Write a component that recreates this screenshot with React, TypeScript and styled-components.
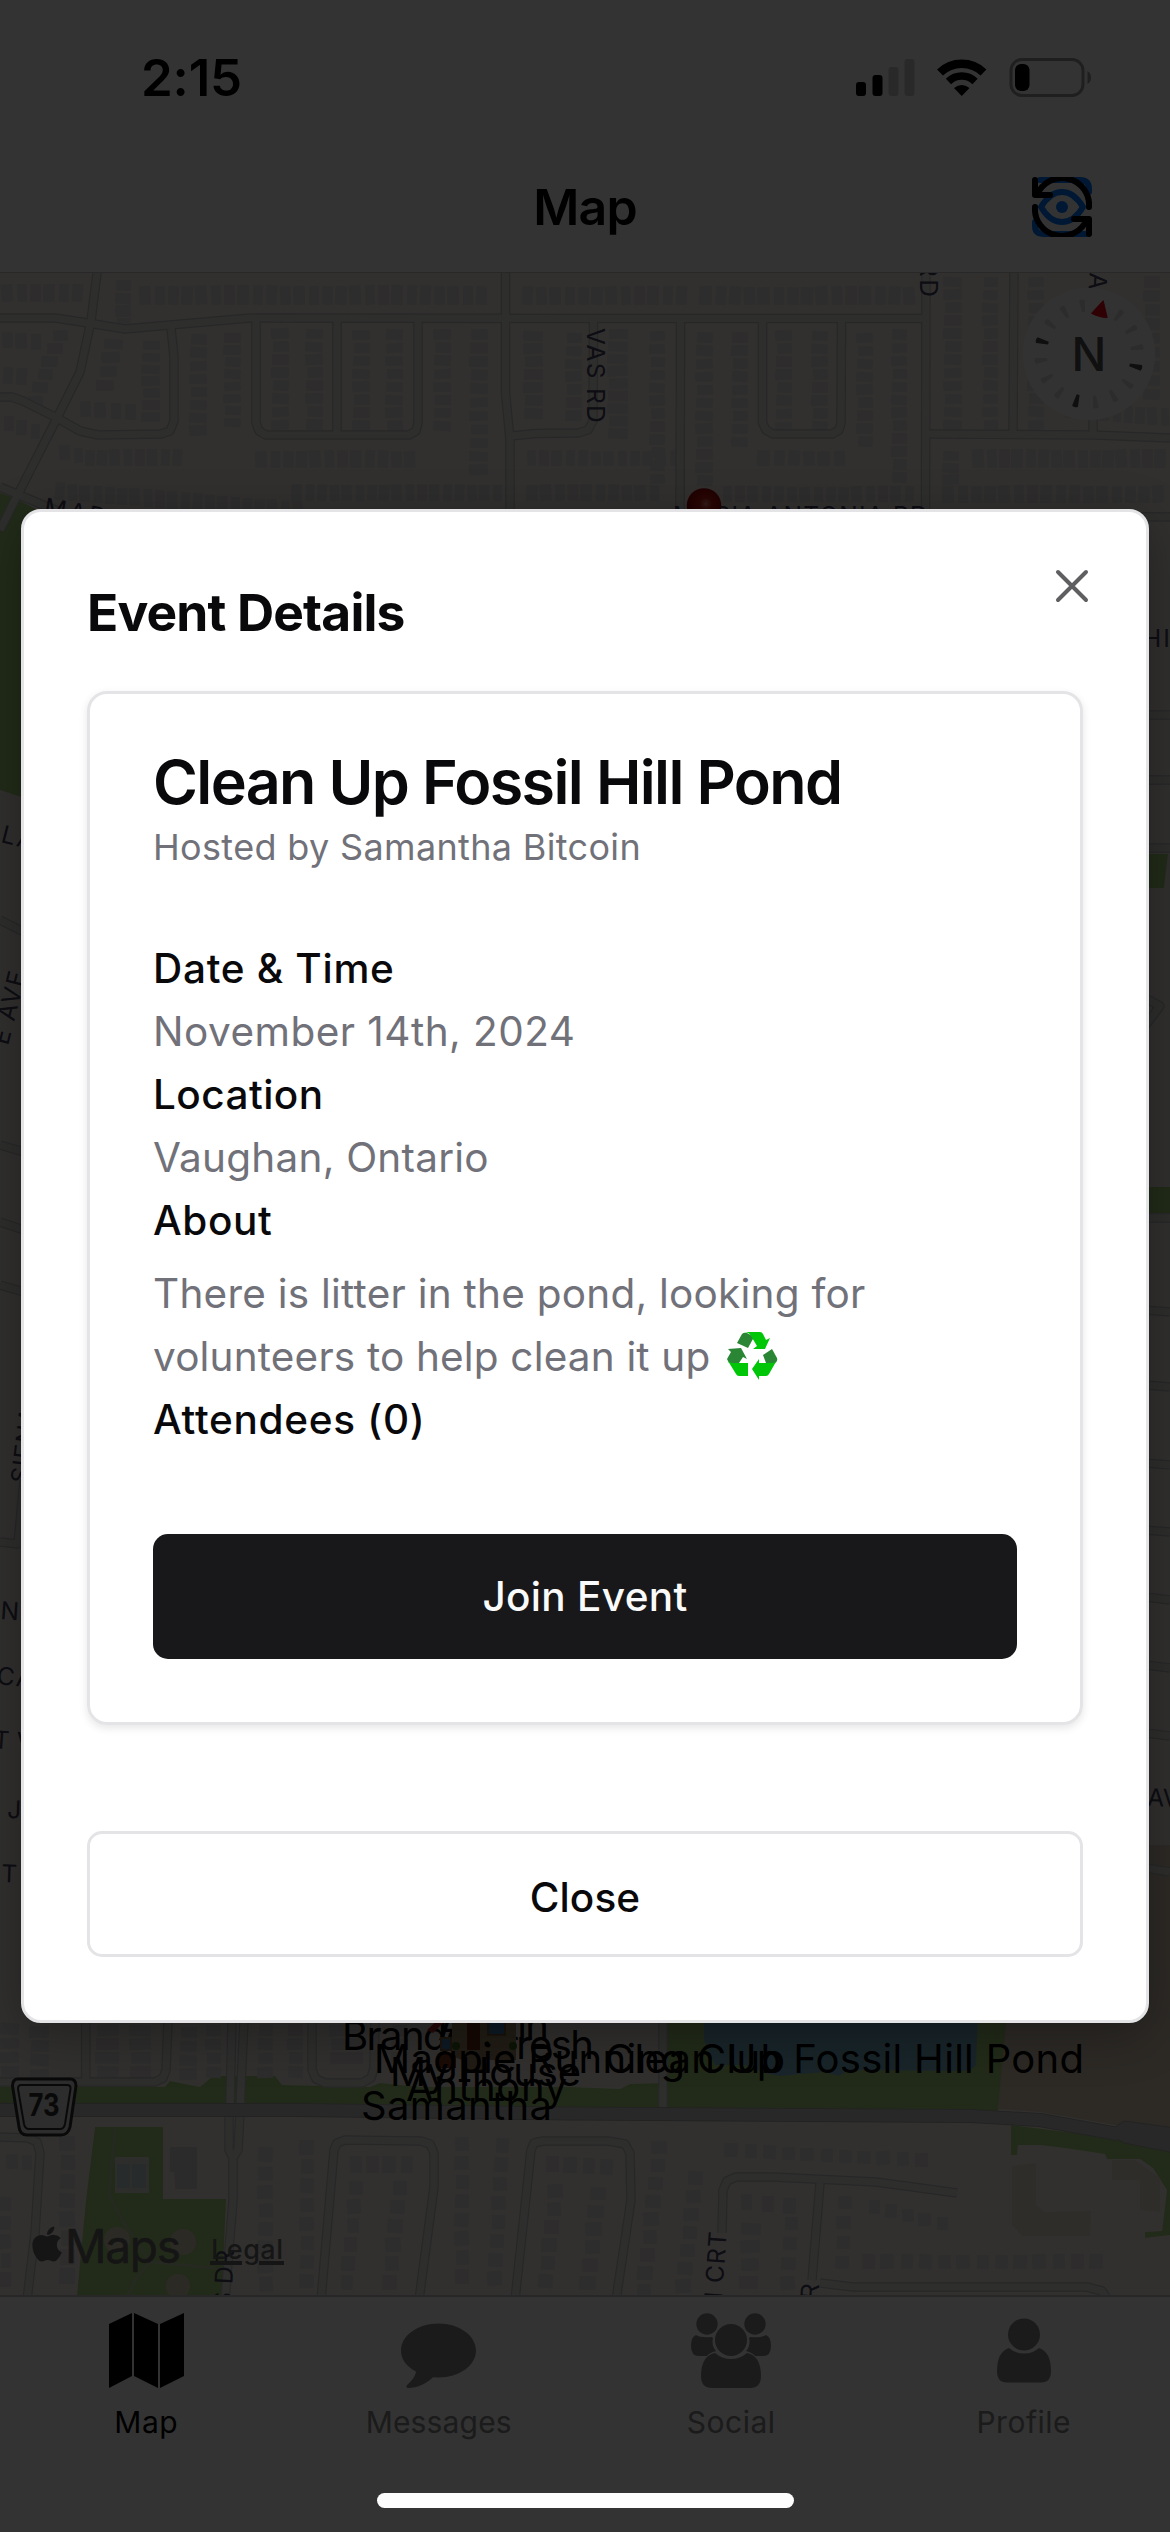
import React from "react";
import styled, { createGlobalStyle } from "styled-components";
import { FaApple } from "react-icons/fa";

const GlobalStyle = createGlobalStyle`
  *, *::before, *::after { box-sizing: border-box; }
  html, body { margin: 0; padding: 0; background: #fff; }
  body { font-family: Inter, "Liberation Sans", sans-serif; }
  button { font-family: inherit; margin: 0; cursor: pointer; }
`;

const Screen = styled.div`
  position: relative;
  width: 1170px;
  height: 2532px;
  overflow: hidden;
  display: flex;
  flex-direction: column;
  background: #fff;
`;

const StatusBar = styled.div`
  height: 141px;
  padding: 14px 79px 0 141px;
  display: flex;
  align-items: center;
  justify-content: space-between;
`;

const Clock = styled.span`
  font-size: 51px;
  font-weight: 600;
  letter-spacing: -0.2px;
  color: #000;
`;

const StatusIcons = styled.svg`
  display: block;
  width: 235px;
  height: 39px;
`;

const NavBar = styled.header`
  height: 132px;
  padding: 0 78px;
  display: grid;
  grid-template-columns: 60px 1fr 60px;
  align-items: center;
  border-bottom: 1px solid #c8c8c8;
`;

const NavTitle = styled.h1`
  grid-column: 2;
  margin: 0;
  text-align: center;
  font-size: 50px;
  line-height: 60px;
  font-weight: 600;
  letter-spacing: -0.8px;
  color: #000;
`;

const ViewToggle = styled.svg`
  width: 60px;
  height: 60px;
  display: block;
`;

const MapCanvas = styled.svg`
  display: block;
  width: 1170px;
  height: 2022px;
  flex: none;
  font-family: Inter, "Liberation Sans", sans-serif;
`;

const TabBar = styled.nav`
  flex: 1;
  display: grid;
  grid-template-columns: repeat(4, 1fr);
  border-top: 2px solid #c0c0c0;
  background: #fcfcfc;
`;

const Tab = styled.div<{ $active?: boolean }>`
  display: flex;
  flex-direction: column;
  align-items: center;
  color: ${(p) => (p.$active ? "#000" : "#868686")};
`;

const TabIcon = styled.svg`
  margin-top: 16px;
  height: 75px;
  fill: currentColor;
  display: block;
`;

const TabLabel = styled.span<{ $spacing?: number }>`
  margin-top: 16px;
  font-size: 30px;
  line-height: 36px;
  font-weight: 400;
  letter-spacing: ${(p) => p.$spacing ?? 0}px;
`;

const Scrim = styled.div`
  position: absolute;
  inset: 0;
  background: rgba(0, 0, 0, 0.8);
  display: flex;
  align-items: center;
  justify-content: center;
`;

const Dialog = styled.section`
  position: relative;
  width: 1128px;
  height: 1514px;
  padding: 63px;
  display: flex;
  flex-direction: column;
  background: #fff;
  border: 3px solid #e4e4e7;
  border-radius: 20px;
  box-shadow: 0 12px 50px rgba(0, 0, 0, 0.32);
`;

const DialogTitle = styled.h2`
  margin: 0 0 41px;
  font-size: 51.5px;
  line-height: 75px;
  font-weight: 700;
  letter-spacing: -0.85px;
  color: #09090b;
`;

const DismissButton = styled.button`
  position: absolute;
  top: 50px;
  right: 50px;
  width: 48px;
  height: 48px;
  padding: 0;
  border: 0;
  background: none;
  color: #5f5f61;
  svg { display: block; }
`;

const Card = styled.article`
  height: 1034px;
  padding: 63px;
  display: flex;
  flex-direction: column;
  border: 3px solid #e4e4e7;
  border-radius: 20px;
  box-shadow: 0 3px 8px rgba(0, 0, 0, 0.1);
`;

const EventName = styled.h3`
  margin: 0 0 12px;
  font-size: 61px;
  line-height: 51px;
  font-weight: 600;
  letter-spacing: -1.63px;
  color: #09090b;
  white-space: nowrap;
`;

const Host = styled.p`
  margin: 0 0 63px;
  font-size: 36px;
  line-height: 54px;
  letter-spacing: 0.34px;
  color: #71717a;
`;

const Details = styled.dl`
  margin: 0;
  font-size: 40.5px;
  line-height: 63px;
`;

const Term = styled.dt<{ $spacing?: number }>`
  font-weight: 500;
  color: #09090b;
  letter-spacing: ${(p) => p.$spacing ?? 0}px;
`;

const Value = styled.dd<{ $top?: number; $spacing?: number }>`
  margin: ${(p) => p.$top ?? 0}px 0 0;
  color: #71717a;
  letter-spacing: ${(p) => p.$spacing ?? 0}px;
`;

const Line = styled.span<{ $spacing?: number }>`
  display: flex;
  align-items: center;
  white-space: nowrap;
  letter-spacing: ${(p) => p.$spacing ?? 0}px;
`;

const RecycleGlyph = styled.svg`
  width: 51px;
  height: 48px;
  margin-left: 17px;
  margin-bottom: 2px;
`;

const Button = styled.button<{ $variant: "solid" | "outline" }>`
  flex: none;
  height: ${(p) => (p.$variant === "solid" ? 125 : 126)}px;
  margin-top: auto;
  padding: ${(p) => (p.$variant === "solid" ? "0" : "6px 0 0")};
  border-radius: 15px;
  font-size: 40.5px;
  font-weight: 500;
  letter-spacing: ${(p) => (p.$variant === "solid" ? 0.3 : 0.1)}px;
  border: ${(p) => (p.$variant === "solid" ? "0" : "3px solid #e4e4e7")};
  background: ${(p) => (p.$variant === "solid" ? "#18181b" : "#fff")};
  color: ${(p) => (p.$variant === "solid" ? "#fafafa" : "#09090b")};
`;

const HomeIndicator = styled.div`
  position: absolute;
  left: 377px;
  bottom: 24px;
  width: 417px;
  height: 15px;
  border-radius: 8px;
  background: #fdfdfd;
`;

/* ---------- map data ---------- */

const minorRoads: string[] = [
  "0,318 55,318 88,323 125,329 170,325 250,318 600,318.5 926,318.5",
  "98,265 91,321 80,372 57,418 10,510 0,530",
  "0,397 12,397 23,401 57,418 80,431 98,435 161,434 170,431 174,421 174,357 171,328",
  "256,321 256,423 259,431 266,435 409,435 416,431 418,423 418,321",
  "337,321 337,432",
  "505.5,265 505.5,393 510,440 510,520",
  "511,436 536,433.5 578,433 588,430 593,421 593.5,320",
  "680.5,321 680,520",
  "762.5,321 762.5,423 766,430 773,434 832,434 839,430 841,423 841.5,321",
  "926,265 925.5,520",
  "1014,265 1013,432",
  "926,434 1094,435 1170,438",
  "1093,410 1093,433",
  "0,487 60,512",
  "930,515 1170,517",
  "85.7,2020 85.7,2080",
  "168,2020 166,2070 163,2078 155,2082 0,2082",
  "232,2020 230,2108",
  "244,2020 240,2108",
  "229,2112 229,2150 233,2158 233,2200 225,2300",
  "240,2112 238,2150 233,2158",
  "312,2020 312,2070 316,2079 325,2083 362,2083 371,2078 374,2068 375,2020",
  "0,2137 28,2138 37,2142 40,2153 35,2233 27,2300",
  "321,2300 334,2150 337,2143 345,2140 421,2141 430,2144 434,2153 434,2187 419,2300",
  "515,2300 531,2150 534,2143 543,2141 608,2141 625,2144 630,2153 631,2200 616,2300",
  "722,2233 723,2190 727,2181 736,2177 773,2177 876,2182 957,2193",
  "820,2183 812,2280",
  "820,2283 853,2287 1087,2287 1102,2291 1108,2300",
  "663,2020 663,2107",
  "0,920 24,932",
  "0,1145 24,1152",
  "0,1222 24,1230",
  "0,1285 24,1292",
  "0,1542 18,1544 24,1480",
  "1145,715 1170,715",
  "1145,780 1170,780",
  "1145,848 1170,848",
  "1145,1218 1170,1218",
  "1145,1310 1170,1312",
  "1145,1385 1170,1387",
  "1145,1463 1170,1465",
  "1145,1530 1170,1532",
  "1145,1597 1170,1600",
  "1145,1665 1170,1668",
  "1145,1733 1170,1736",
  "1145,1868 1170,1872",
  "1145,998 1160,1006 1145,1026",
];

const majorRoad = "0,2110 300,2110 570,2113.5 970,2116 1040,2120 1118,2134";

/* x, y of the first lot, step to the next one, how many, lot size */
type LotRow = [number, number, number, number, number, number, number];
const lotRows: LotRow[] = [
  [2, 284, 14, 0, 6, 12, 18],
  [116, 279, 0, 13, 4, 16, 12],
  [140, 285, 14, 0, 25, 12, 20],
  [522, 286, 14, 0, 12, 12, 19],
  [700, 286, 14.5, 0, 15, 13, 19],
  [52, 330, -5, 13, 6, 17, 11],
  [105, 338, -3, 14, 4, 19, 11],
  [142, 340, 0, 12, 7, 19, 10],
  [80, 400, 15, 1, 4, 12, 17],
  [190, 334, 0, 13, 8, 18, 11],
  [224, 333, 0, 12, 8, 18, 10],
  [272, 328, 0, 13, 8, 18, 11],
  [306, 328, 0, 13, 8, 18, 11],
  [353, 329, 0, 13, 8, 18, 11],
  [386, 329, 0, 13, 8, 18, 11],
  [434, 329, 0, 13, 8, 18, 11],
  [470, 329, 0, 13.5, 11, 19, 11],
  [524, 330, 0, 13, 7, 20, 11],
  [566, 332, 0, 13, 7, 17, 11],
  [2, 331, 14, 1, 3, 12, 17],
  [2, 367, 14, 1, 2, 12, 17],
  [4, 416, 13, 4, 3, 11, 15],
  [60, 445, 13, 3, 2, 11, 15],
  [85, 449, 12.5, 0, 8, 11, 17],
  [256, 450, 13.5, 0, 12, 12, 18],
  [55, 482, 12.5, 1, 20, 11, 18],
  [292, 484, 12.5, 0, 17, 11, 17],
  [526, 450, 13, 0, 12, 11, 16],
  [527, 484, 13.5, 0, 10, 12, 17],
  [608, 328, 0, 12.5, 9, 21, 11],
  [650, 330, 0, 13, 12, 16, 11],
  [696, 332, 0, 13, 12, 18, 11],
  [732, 332, 0, 13, 9, 17, 11],
  [776, 330, 0, 13, 8, 17, 11],
  [812, 330, 0, 13, 8, 17, 11],
  [857, 332, 0, 13, 9, 17, 11],
  [892, 329, 0, 13, 12, 16, 11],
  [758, 450, 15, 0, 6, 13, 16],
  [722, 486, 13, 0, 15, 11, 16],
  [944, 276, 0, 13, 12, 19, 11],
  [983, 276, 0, 13, 12, 16, 11],
  [1028, 276, 0, 13, 12, 17, 11],
  [1064, 400, 12, 1, 9, 10, 18],
  [1144, 276, 0, 14, 9, 17, 12],
  [973, 449, 13, 0, 15, 12, 19],
  [943, 450, 0, 12, 3, 17, 11],
  [943, 485, 14, 0, 16, 12, 18],
  [0, 2023, 0, 14, 4, 20, 12],
  [30, 2026, 0, 14, 4, 20, 12],
  [96, 2024, 0, 14, 4, 24, 12],
  [130, 2024, 0, 14, 4, 22, 12],
  [180, 2026, 0, 14, 4, 18, 12],
  [206, 2024, 0, 14, 4, 16, 12],
  [258, 2024, 0, 14, 4, 16, 12],
  [288, 2024, 0, 14, 4, 16, 12],
  [330, 2024, 0, 14, 3, 34, 12],
  [392, 2024, 0, 14, 3, 16, 12],
  [60, 2135, 0, 19, 8, 16, 16],
  [258, 2147, 0, 18.5, 8, 16, 15],
  [300, 2140, 0, 19, 8, 15, 15],
  [349, 2156, 17, 0, 4, 14, 17],
  [350, 2180, -2, 19, 6, 14, 15],
  [392, 2180, -2, 19, 6, 16, 15],
  [455, 2136, 0, 19, 8, 15, 15],
  [495, 2138, -1, 19, 8, 15, 15],
  [546, 2156, 18, 1, 4, 14, 16],
  [548, 2184, -2, 18, 6, 16, 14],
  [590, 2186, -2, 18, 6, 17, 14],
  [652, 2140, -2, 18, 9, 16, 14],
  [688, 2171, -2, 18, 7, 16, 14],
  [725, 2143, 19, 1, 11, 14, 14],
  [740, 2194, 22, 2, 3, 13, 16],
  [742, 2222, -1, 18, 4, 20, 13],
  [784, 2216, -1, 20, 4, 15, 14],
  [838, 2195, -1, 20, 4, 15, 14],
  [868, 2200, 17, 4, 5, 13, 14],
  [862, 2254, 19, 0, 13, 14, 15],
  [7, 2154, 14, 1, 2, 12, 15],
  [0, 2196, 0, 19, 5, 12, 15],
];

const lotShapes = lotRows.flatMap((row, r) => {
  const [x, y, dx, dy, n, w, h] = row;
  return Array.from({ length: n }, (_, i) => {
    const k = (r * 7 + i * 13) % 11;
    return {
      x: x + dx * i + (k % 3) - 1,
      y: y + dy * i + (k % 2),
      w: w - (k % 3),
      h: h - (k % 2),
      turn: (k - 5) * 0.7,
      warm: k === 4,
    };
  });
});

type StreetName = { text: string; x: number; y: number; turn: number; size?: number; gap?: number };
const streetNames: StreetName[] = [
  { text: "VAS RD", x: 587, y: 328, turn: 90, gap: 1.3 },
  { text: "RD", x: 920, y: 261, turn: 90, gap: 2.5 },
  { text: "EA", x: 1091, y: 255, turn: 94, gap: 2.5 },
  { text: "MARIA ANTONIA RD", x: 673, y: 524, turn: 0, gap: 1.2 },
  { text: "MARIA", x: 43, y: 515, turn: 10, gap: 3 },
  { text: "LA", x: 0, y: 842, turn: 14, gap: 2 },
  { text: "E AVE", x: 8, y: 1046, turn: -76, gap: 1.5 },
  { text: "SIENA", x: 28, y: 1484, turn: -83, gap: 1 },
  { text: "N", x: 0, y: 1619, turn: 4 },
  { text: "CA", x: -4, y: 1684, turn: 6, gap: 2 },
  { text: "T V", x: -7, y: 1748, turn: 4 },
  { text: "J", x: 7, y: 1818, turn: 2 },
  { text: "T", x: 1, y: 1882, turn: 2 },
  { text: "HI", x: 1143, y: 647, turn: 0, gap: 2 },
  { text: "AV", x: 1147, y: 1806, turn: 2, gap: 0 },
  { text: "S DR", x: 231, y: 2308, turn: -87, gap: 0.5 },
  { text: "I CRT", x: 722, y: 2299, turn: -86, gap: 1 },
  { text: "R", x: 818, y: 2300, turn: -86 },
];

type Pin = { text: string; x: number; y: number; w: number };
const pinsBehindHouse: Pin[] = [
  { text: "Austin", x: 438, y: 2040, w: 111 },
  { text: "Suresh", x: 470, y: 2059, w: 124 },
  { text: "Brandon", x: 342, y: 2050, w: 150 },
];
const pinsInFront: Pin[] = [
  { text: "Magpie Running Club", x: 374, y: 2073, w: 411 },
  { text: "My House", x: 390, y: 2086, w: 191 },
  { text: "Anthony", x: 406, y: 2101, w: 161 },
  { text: "Samantha", x: 361, y: 2120, w: 191 },
  { text: "Clean Up Fossil Hill Pond", x: 605, y: 2073, w: 479 },
];

const compassTicks = Array.from({ length: 16 }, (_, i) => i).filter((i) => i > 0);

function PinLabels({ items }: { items: Pin[] }) {
  return (
    <g fill="#000" fontSize="40">
      {items.map((p) => (
        <text key={p.text} x={p.x} y={p.y} textLength={p.w}>{p.text}</text>
      ))}
    </g>
  );
}

function CityMap() {
  return (
    <MapCanvas viewBox="0 273 1170 2022" aria-label="Map">
      <defs>
        <radialGradient id="pinBall" cx="0.55" cy="0.45" r="0.6">
          <stop offset="0" stopColor="#ff8a7a" />
          <stop offset="0.3" stopColor="#c82018" />
          <stop offset="1" stopColor="#900000" />
        </radialGradient>
      </defs>
      <rect x="0" y="273" width="1170" height="2022" fill="#f5f0ea" />
      <g fill="#aad77f">
        <path d="M0 493 12 497 38 510 30 800 0 790Z" />
        <path d="M1145 854H1168L1164 888H1145Z" />
        <path d="M1145 1187H1170V1213H1145Z" />
        <path d="M0 2087H165L170 2081 200 2087 213 2076H275L282 2085 370 2087 380 2083 420 2087H570L620 2089 630 2084 667 2083V2015H1012L998 2112H0Z" />
        <path d="M95 2127H163V2199H226L222 2295H77L86 2200Z" />
        <path d="M1011 2125 1115 2138 1170 2152V2235L1145 2238V2232L1162 2231 1167 2190 1153 2168 1140 2159 1107 2159 1105 2154 1065 2148 1040 2145 1018 2145 1017 2155H1011Z" />
      </g>
      <path d="M1145 1845H1170V2140L1115 2125 1040 2112 998 2109 1007 2015H1145Z" fill="#e1d2bc" />
      <path d="M704 2015H978L976 2065Q972 2071 960 2071L850 2070 838 2076 826 2072 800 2074 780 2076 765 2073 745 2065 715 2065 704 2040Z" fill="#7db8d2" />
      <path d="M1012 2166 1036 2163 1036 2205 1045 2212 1091 2211 1090 2236 1022 2236 1012 2225Z M1112 2160H1135L1160 2178V2212L1140 2210V2180H1112Z" fill="#e8e0cc" />
      <rect x="115" y="2157" width="34" height="36" fill="#dfdfda" />
      <path d="M117 2164H130V2188H117Z M132 2164H146V2188H132Z" fill="#c8d6d4" />
      <path d="M170 2147H197V2189H175L174 2172H170Z" fill="#d9d8d6" />
      <g fill="#dccfb8">
        <circle cx="183" cy="2242" r="13" />
        <circle cx="178" cy="2286" r="12" />
        <circle cx="117" cy="2240" r="13" />
      </g>
      <path d="M115 2128 109 2195 125 2225 150 2262 135 2280 128 2295 M150 2262 215 2268" fill="none" stroke="#bfcbaa" strokeWidth="2.5" />
      <g>
        {lotShapes.map((s, i) => (
          <rect
            key={i}
            x={s.x}
            y={s.y}
            width={s.w}
            height={s.h}
            fill={s.warm ? "#e6dbd9" : "#e4e2df"}
            transform={`rotate(${s.turn} ${s.x + s.w / 2} ${s.y + s.h / 2})`}
          />
        ))}
      </g>
      <g fill="none" strokeLinejoin="round">
        <g stroke="#bcc1be" strokeWidth="9.6">
          {minorRoads.map((p, i) => <polyline key={i} points={p} />)}
        </g>
        <g stroke="#e3e3e1" strokeWidth="7.2">
          {minorRoads.map((p, i) => <polyline key={i} points={p} />)}
        </g>
        <polyline points={majorRoad} stroke="#aaa9a8" strokeWidth="14" />
        <path d="M1114 2128 1124 2121 1175 2128V2153L1124 2143 1114 2137Z" fill="#c9c9c9" stroke="#aaa9a8" />
        <polyline points={majorRoad} stroke="#c9c9c9" strokeWidth="12" />
      </g>
      <g fill="#42425e" fontWeight="400">
        {streetNames.map((s, i) => (
          <text
            key={i}
            fontSize={s.size ?? 24.5}
            letterSpacing={s.gap ?? 0}
            transform={`translate(${s.x} ${s.y}) rotate(${s.turn})`}
          >
            {s.text}
          </text>
        ))}
      </g>
      <circle cx="704" cy="505.5" r="17.3" fill="url(#pinBall)" />

      <g transform="translate(1089 354)">
        <circle r="66" fill="#fbfbfb" />
        <g transform="rotate(15)">
          {compassTicks.map((i) => (
            <path
              key={i}
              d="M-3 -54Q0 -56 3 -54L1.5 -42H-1.5Z"
              fill={i % 4 === 0 ? "#4a4a4a" : "#dcdcdc"}
              transform={`rotate(${i * 22.5})`}
            />
          ))}
          <path d="M0 -55 8 -40Q0 -38 -8 -40Z" fill="#e80014" stroke="#e80014" strokeLinejoin="round" />
        </g>
        <text y="16.5" textAnchor="middle" fontSize="46" fontWeight="500" fill="#525254">N</text>
      </g>

      <g fill="#dedede" stroke="#303030" strokeWidth="2.6" strokeLinejoin="round">
        <path d="M18 2079H70Q76 2079 76 2086L70 2127Q68 2135 61 2135H27Q20 2135 19 2127L12.500 2086Q12.500 2079 18 2079Z" strokeWidth="3" />
        <path d="M21 2085H67Q71 2085 70.500 2089L65 2124Q64 2129 60 2129H29Q25 2129 24 2124L18 2089Q18 2085 21 2085Z" strokeWidth="2" fill="none" />
      </g>
      <text x="28.500" y="2116" fontSize="31" fontWeight="700" fill="#303030" textLength="31" lengthAdjust="spacingAndGlyphs">73</text>

      <g color="#6c6c6c" fill="#6c6c6c">
        <FaApple x={27} y={2224} size={40} />
        <text x="65" y="2263" fontSize="46" fontWeight="400" stroke="#6c6c6c" strokeWidth="0.6" textLength="116">Maps</text>
        <text x="211" y="2259" fontSize="27" fontWeight="500" textLength="72">Legal</text>
        <path d="M210 2261H242V2265H210Z M259 2261H284V2265H259Z" />
      </g>

      <PinLabels items={pinsBehindHouse} />
      <g>
        <path d="M452 2056V2012H516V2060H462Z" fill="#a58c68" />
        <path d="M427 2030 442 2016 446 2020 433 2033Z" fill="#c02828" />
        <path d="M467 2015H480V2050H467Z" fill="#702818" />
        <path d="M488 2020H505V2035H488Z" fill="#4080b8" stroke="#806040" strokeWidth="2" />
        <path d="M441 2038H451V2050H441Z" fill="#4080b8" stroke="#806040" strokeWidth="2" />
        <path d="M438 2056Q448 2048 456 2056V2068H438Z" fill="#803820" />
        <path d="M462 2052H482L488 2070H464Z" fill="#a58c68" />
        <circle cx="456" cy="2046" r="4" fill="#3f6520" />
        <circle cx="513" cy="2046" r="4" fill="#3f6520" />
        <circle cx="487" cy="2044" r="2.500" fill="#000" />
      </g>
      <PinLabels items={pinsInFront} />
    </MapCanvas>
  );
}

function DeviceStatus() {
  return (
    <StatusIcons viewBox="856 58 235 39">
      <rect x="856" y="82" width="10" height="14" rx="3" />
      <rect x="872.500" y="75" width="10" height="21" rx="3" />
      <g fill="#ccc">
        <rect x="888.500" y="67" width="10" height="29" rx="3" />
        <rect x="904.500" y="59" width="10" height="37" rx="3" />
      </g>
      <g fill="none" stroke="#000">
        <path d="M940 72.500A31.500 31.500 0 0 1 983.500 72.500" strokeWidth="8.500" />
        <path d="M948.500 81.500A19 19 0 0 1 975 81.500" strokeWidth="7.500" />
      </g>
      <path d="M954 88Q961.700 82 969.500 88L961.700 96Z" />
      <rect x="1011" y="59.500" width="72" height="36" rx="11" fill="none" stroke="#999" strokeWidth="3" />
      <rect x="1015" y="64" width="14.500" height="27" rx="6" />
      <path d="M1087.500 71Q1091 73 1091 77.500T1087.500 84Z" fill="#999" />
    </StatusIcons>
  );
}

export default function App() {
  return (
    <>
      <GlobalStyle />
      <Screen>
        <StatusBar>
          <Clock>2:15</Clock>
          <DeviceStatus />
        </StatusBar>
        <NavBar>
          <NavTitle>Map</NavTitle>
          <ViewToggle viewBox="0 0 60 60" fill="none" strokeWidth="6" strokeLinecap="round" strokeLinejoin="round">
            <g stroke="#007aff">
              <path d="M8 3H48Q57 3 57 12V15" />
              <path d="M3 45V49Q3 57 12 57H54" />
              <path d="M9 30Q18 15 30 15T51 30Q42 45 30 45T9 30Z" />
            </g>
            <circle cx="30" cy="30" r="6" fill="#007aff" />
            <g stroke="#000">
              <path d="M3 3V18H18" />
              <path d="M57 30A27 27 0 0 0 5 18" />
              <path d="M57 57V42H42" />
              <path d="M3 30A27 27 0 0 0 55 42" />
            </g>
          </ViewToggle>
        </NavBar>

        <CityMap />

        <TabBar>
          <Tab $active>
            <TabIcon viewBox="0 0 75 75" width="75">
              <path d="M0 11 23 0V63L0 75Z M25 0 49 11V75L25 63Z M51 11 75 0V63L51 75Z" />
            </TabIcon>
            <TabLabel $spacing={0.5}>Map</TabLabel>
          </Tab>
          <Tab>
            <TabIcon viewBox="0 0 75 75" width="75">
              <path d="M37.500 10.500C58 10.500 75 22.500 75 37.500S58 64.500 37.500 64.500L32 64.200C25 71 15 75 8 75 4.500 75 5 73 7 71 11 67.500 14.500 63 15 58.500 6 54 0 46.500 0 37.500 0 22.500 17 10.500 37.500 10.500Z" />
            </TabIcon>
            <TabLabel $spacing={0.15}>Messages</TabLabel>
          </Tab>
          <Tab>
            <TabIcon viewBox="0 0 80 75" width="80">
              <circle cx="16" cy="11" r="10.700" />
              <circle cx="64" cy="11" r="10.700" />
              <circle cx="40" cy="27" r="16" />
              <path d="M5 22Q10 25 20 24 21 24 22 25 20 32 25 38 18 40 16 43H8Q0 43 0 33 0 24 5 22Z" />
              <path d="M75 22Q70 25 60 24 59 24 58 25 60 32 55 38 62 40 64 43H72Q80 43 80 33 80 24 75 22Z" />
              <path d="M24 40Q31 46 40 46T56 40Q70 43 70 63 70 75 59 75H21Q10 75 10 63 10 43 24 40Z" />
            </TabIcon>
            <TabLabel $spacing={0.5}>Social</TabLabel>
          </Tab>
          <Tab>
            <TabIcon viewBox="0 0 54 75" width="54">
              <circle cx="27" cy="21.500" r="16" />
              <path d="M12 35Q18 40.500 27 40.500T42 35Q54 39 54 58 54 69.500 44 69.500H10Q0 69.500 0 58 0 39 12 35Z" />
            </TabIcon>
            <TabLabel $spacing={0.5}>Profile</TabLabel>
          </Tab>
        </TabBar>

        <Scrim>
          <Dialog role="dialog" aria-modal="true">
            <DialogTitle>Event Details</DialogTitle>
            <Card>
              <EventName>Clean Up Fossil Hill Pond</EventName>
              <Host>Hosted by Samantha Bitcoin</Host>
              <Details>
                <Term $spacing={0.7}>Date &amp; Time</Term>
                <Value $spacing={0.47}>November 14th, 2024</Value>
                <Term $spacing={0.45}>Location</Term>
                <Value $spacing={0.23}>Vaughan, Ontario</Value>
                <Term $spacing={0.6}>About</Term>
                <Value $top={10}>
                  <Line $spacing={0.24}>There is litter in the pond, looking for</Line>
                  <Line $spacing={0.17}>
                    volunteers to help clean it up
                    <RecycleGlyph viewBox="0 0 51 48">
                      <g fill="#2a8535">
                        <path d="M10 11 15 2Q17 0 20 1L27 5 21 16Z" />
                        <path d="M1 17 14 16 20 27 16 25 12 31H2L0 27 4 20Z" />
                        <path d="M36 23 45 17 50 26Q51 29 48 31L39 31Z" />
                      </g>
                      <g fill="#00c608">
                        <path d="M17 0H33Q35 0 36 2L39 8 43 6 38 17H26L30 14 24 4Q22 0 17 0Z" />
                        <path d="M1 29Q3 31 6 31H21V44H12Q10 44 9 42Z" />
                        <path d="M50 28 42 42Q41 44 39 44H32V48L25 37 32 27V31H45Q49 31 50 28Z" />
                      </g>
                    </RecycleGlyph>
                  </Line>
                </Value>
                <Term $spacing={0.7}>Attendees (0)</Term>
              </Details>
              <Button $variant="solid">Join Event</Button>
            </Card>
            <Button $variant="outline">Close</Button>
            <DismissButton aria-label="Dismiss">
              <svg width="48" height="48" viewBox="0 0 48 48" stroke="currentColor" strokeWidth="4" strokeLinecap="round">
                <path d="M10 10 38 38M38 10 10 38" />
              </svg>
            </DismissButton>
          </Dialog>
        </Scrim>
        <HomeIndicator />
      </Screen>
    </>
  );
}
